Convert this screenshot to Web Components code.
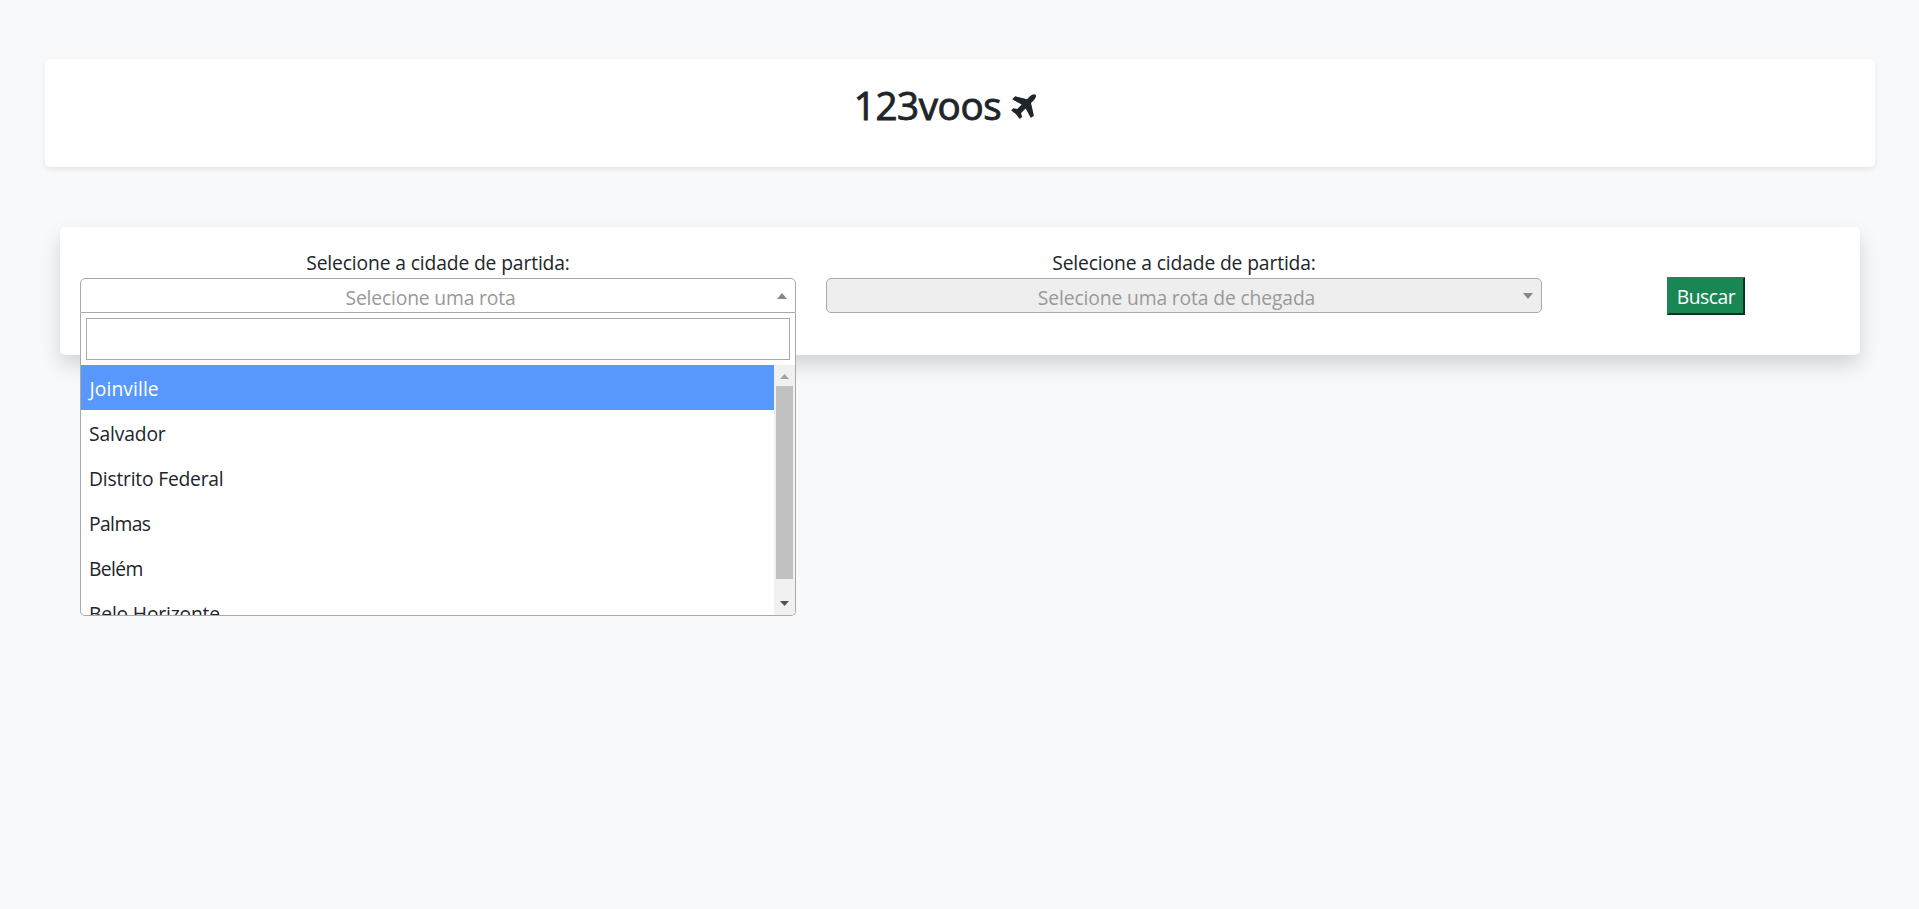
<!DOCTYPE html>
<html lang="pt-br">
<head>
<meta charset="utf-8">
<title>123voos</title>
<style>
html,body{height:100%}
body{margin:0;background:#f8f9fb;color:#212529;font:19.3px/30px "Open Sans","Noto Sans",sans-serif;letter-spacing:-.14px;overflow:hidden}
</style>
</head>
<body>
<flight-app></flight-app>

<template id="app">
<style>
:host{display:block;padding:59px 44px 0 45px}
search-panel{margin:60px 15px 0}
.p1{--ls:-.17px}.p2{--ls:-.13px}
</style>
<brand-header>123voos</brand-header>
<search-panel>
  <route-select class="p1" open label="Selecione a cidade de partida:" placeholder="Selecione uma rota">
    <option-list>
      <route-option active style="letter-spacing:.08px;padding-left:8.5px">Joinville</route-option>
      <route-option style="letter-spacing:-.15px">Salvador</route-option>
      <route-option style="letter-spacing:-.22px">Distrito Federal</route-option>
      <route-option style="letter-spacing:-.6px">Palmas</route-option>
      <route-option style="letter-spacing:-.6px">Belém</route-option>
      <route-option style="letter-spacing:-.18px">Belo Horizonte</route-option>
    </option-list>
  </route-select>
  <route-select class="p2" disabled label="Selecione a cidade de partida:" placeholder="Selecione uma rota de chegada"></route-select>
  <search-button>Buscar</search-button>
</search-panel>
</template>

<template id="brand">
<style>
:host{display:block;box-sizing:border-box;height:108px;padding:22px 30px 0 0;background:#fff;border-radius:5px;box-shadow:0 2.5px 5px rgba(0,0,0,.075)}
h1{margin:0;display:flex;justify-content:center;font-size:38.6px;line-height:48px;font-weight:400;letter-spacing:-.4px;-webkit-text-stroke:.9px currentColor}
svg{width:25px;height:25px;margin:13px 0 0 10px;fill:currentColor}
</style>
<h1><slot></slot><svg viewBox="0 0 1424 1404"><path transform="translate(0 1416) scale(1 -1)" d="M1397 1389q44-52 12-148t-108-172l-161-161l160-696q5-19-12-33l-128-96q-7-6-19-6q-4 0-7 1q-15 3-21 16l-279 508l-259-259l53-194q5-17-8-31l-96-96q-9-9-23-9h-2q-15 2-24 13l-189 252l-252 189q-11 7-13 23q-1 13 9 25l96 97q9 9 23 9q6 0 8-1l194-53l259 259l-508 279q-14 8-17 24q-2 16 9 27l128 128q14 13 30 8l665-159l160 160q76 76 172 108t148-12z"/></svg></h1>
</template>

<template id="panel">
<style>
:host{display:grid;grid-template-columns:746px 746px 298px;box-sizing:border-box;height:128px;padding:20px 5px 0;background:#fff;border-radius:5px;box-shadow:0 10px 20px rgba(0,0,0,.15)}
</style>
<slot></slot>
</template>

<template id="select">
<style>
:host{display:block;padding:0 15px;position:relative}
label{display:block;text-align:center;height:31px;line-height:31px}
.box{box-sizing:border-box;height:35px;border:1px solid #aaa;border-radius:5px;background:#fff;display:flex;align-items:center;line-height:33px;color:#999}
:host([open]) .box{border-radius:5px 5px 0 0}
:host([disabled]) .box{background:#eee}
.text{flex:1;text-align:center;padding:4px 0 0 10px;line-height:29px;letter-spacing:var(--ls)}
.arrow{width:10px;height:6px;margin:0 8px 0 7px;fill:#888}
:host([open]) .arrow{transform:scaleY(-1)}
</style>
<label></label>
<div class="box"><span class="text"></span><svg class="arrow" viewBox="0 0 10 6"><path d="M0 0H10L5 6Z"/></svg></div>
<slot></slot>
</template>

<template id="list">
<style>
:host{display:block;position:absolute;z-index:2;left:15px;right:15px;top:66px;box-sizing:border-box;height:303px;background:#fff;border:1px solid #aaa;border-top:0;border-radius:0 0 5px 5px;overflow:hidden}
.search{padding:5px}
input{display:block;box-sizing:border-box;width:100%;height:42px;border:1px solid #aaa;padding:5px;outline:0;background:#fff}
.body{display:flex;height:250px}
.items{flex:1;overflow:hidden}
.bar{width:21px;background:#f1f1f1;display:flex;flex-direction:column;align-items:center}
.bar svg{width:9px;height:5px}
.thumb{width:17px;height:193px;background:#c1c1c1;margin:7px 0 22px}
</style>
<div class="search"><input type="text"></div>
<div class="body"><div class="items"><slot></slot></div>
<div class="bar"><svg style="margin-top:9px" viewBox="0 0 9 5"><path fill="#a3a3a3" d="M0 5H9L4.5 0Z"/></svg><div class="thumb"></div><svg viewBox="0 0 9 5"><path fill="#505050" d="M0 0H9L4.5 5Z"/></svg></div></div>
</template>

<template id="option">
<style>
:host{display:block;height:45px;box-sizing:border-box;padding:9px 7.5px 0 8px;line-height:30px}
:host([active]){background:#5897fb;color:#fff}
</style>
<slot></slot>
</template>

<template id="button">
<style>
:host{display:flex;justify-content:center;align-items:flex-start;padding-top:30px}
button{box-sizing:border-box;width:78px;height:38px;padding:1px 0 0;border:2px outset #198754;background:#198754;color:#fff;font:inherit;letter-spacing:-.45px;line-height:30px;border-radius:0}
</style>
<button><slot></slot></button>
</template>

<script>
class Base extends HTMLElement{
  constructor(id){
    super();
    this.attachShadow({mode:'open'}).append(document.getElementById(id).content.cloneNode(true));
  }
}
customElements.define('brand-header',class extends Base{constructor(){super('brand')}});
customElements.define('search-panel',class extends Base{constructor(){super('panel')}});
customElements.define('route-select',class extends Base{
  constructor(){super('select')}
  connectedCallback(){
    this.shadowRoot.querySelector('label').textContent=this.getAttribute('label');
    this.shadowRoot.querySelector('.text').textContent=this.getAttribute('placeholder');
  }
});
customElements.define('option-list',class extends Base{constructor(){super('list')}});
customElements.define('route-option',class extends Base{constructor(){super('option')}});
customElements.define('search-button',class extends Base{constructor(){super('button')}});
customElements.define('flight-app',class extends Base{constructor(){super('app')}});
</script>
</body>
</html>
